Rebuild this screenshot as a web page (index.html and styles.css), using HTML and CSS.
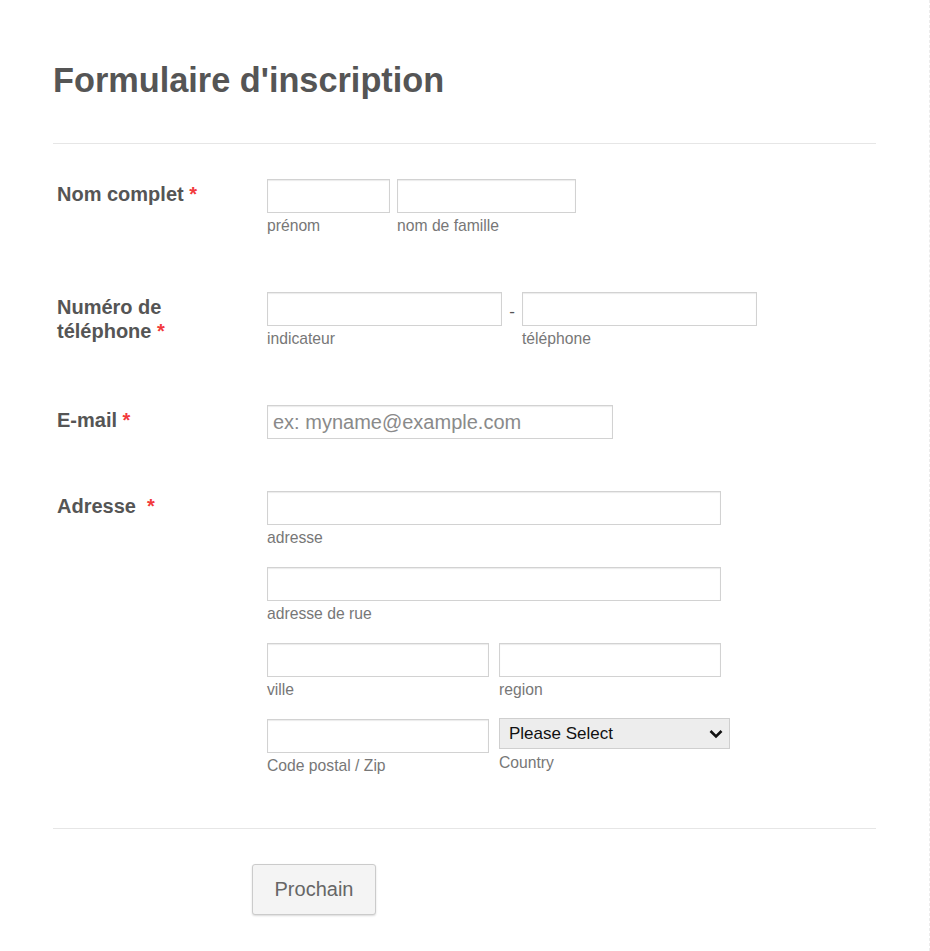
FILE: index.html
```html
<!DOCTYPE html>
<html lang="fr">
<head>
<meta charset="utf-8">
<title>Formulaire d'inscription</title>
<link rel="stylesheet" href="styles.css">
</head>
<body>
<form class="form">
  <div class="header">
    <h1 class="title">Formulaire d'inscription</h1>
  </div>

  <div class="row">
    <label class="label">Nom complet <span class="req">*</span></label>
    <div class="fields">
      <div class="line">
        <div class="field"><input class="input w-first" type="text"><span class="sub">prénom</span></div>
        <div class="field"><input class="input w-last" type="text"><span class="sub">nom de famille</span></div>
      </div>
    </div>
  </div>

  <div class="row">
    <label class="label">Numéro de<br>téléphone <span class="req">*</span></label>
    <div class="fields">
      <div class="line phone">
        <div class="field"><input class="input w-phone" type="text"><span class="sub">indicateur</span></div>
        <span class="dash">-</span>
        <div class="field"><input class="input w-phone" type="text"><span class="sub">téléphone</span></div>
      </div>
    </div>
  </div>

  <div class="row">
    <label class="label">E-mail <span class="req">*</span></label>
    <div class="fields">
      <input class="input w-email" type="text" placeholder="ex: myname@example.com">
    </div>
  </div>

  <div class="row">
    <label class="label">Adresse &nbsp;<span class="req">*</span></label>
    <div class="fields addr">
      <div class="field"><input class="input w-addr" type="text"><span class="sub">adresse</span></div>
      <div class="field"><input class="input w-addr" type="text"><span class="sub">adresse de rue</span></div>
      <div class="line half">
        <div class="field"><input class="input w-half" type="text"><span class="sub">ville</span></div>
        <div class="field"><input class="input w-half" type="text"><span class="sub">region</span></div>
      </div>
      <div class="line half">
        <div class="field"><input class="input w-half" type="text"><span class="sub">Code postal / Zip</span></div>
        <div class="field select-field">
          <span class="select-wrap">
            <select class="select"><option>Please Select</option></select>
            <svg class="chev" width="14" height="10" viewBox="0 0 14 10"><path d="M1.5 2 L7 7.5 L12.5 2" fill="none" stroke="#111" stroke-width="2.6"/></svg>
          </span>
          <span class="sub">Country</span>
        </div>
      </div>
    </div>
  </div>

  <div class="footer">
    <button class="btn" type="button">Prochain</button>
  </div>
</form>
</body>
</html>
```

FILE: styles.css
```css
html, body {
  margin: 0;
  padding: 0;
  background: #fff;
}
body {
  font-family: "Liberation Sans", Arial, sans-serif;
  color: #555;
  border-right: 1px dashed #ececec;
  min-height: 951px;
  box-sizing: border-box;
}
.form {
  width: 823px;
  margin-left: 53px;
  padding-top: 56px;
}
.header {
  border-bottom: 1px solid #e6e6e6;
  padding-bottom: 39px;
  margin-bottom: 9px;
}
.title {
  margin: 0;
  font-size: 34.3px;
  line-height: 48px;
  font-weight: bold;
  color: #555;
}
.row {
  display: grid;
  grid-template-columns: 210px 1fr;
  padding: 26px 0 26px 4px;
}
.label {
  font-size: 20px;
  font-weight: bold;
  line-height: 24px;
  padding-top: 3px;
  color: #555;
}
.req {
  color: #f23a3c;
}
.fields {
  display: flex;
  flex-direction: column;
}
.line {
  display: flex;
  gap: 7px;
}
.line.phone {
  gap: 0;
}
.line.half {
  gap: 10px;
}
.addr {
  gap: 15px;
}
.field {
  display: flex;
  flex-direction: column;
}
.input {
  box-sizing: border-box;
  height: 34px;
  border: 1px solid #d2d2d2;
  box-shadow: inset 0 1px 1px #ececec;
  border-radius: 0;
  margin: 0;
  padding: 0 5px;
  font-family: "Liberation Sans", Arial, sans-serif;
  font-size: 20px;
  color: #555;
  background: #fff;
  outline: none;
}
.input::placeholder {
  color: #8a8a8a;
}
.sub {
  display: block;
  margin-top: 4px;
  margin-bottom: 5px;
  font-size: 15.7px;
  line-height: 18px;
  color: #777;
}
.w-first { width: 123px; }
.w-last { width: 179px; }
.w-phone { width: 235px; }
.w-email { width: 346px; }
.w-addr { width: 454px; }
.w-half { width: 222px; }
.dash {
  width: 20px;
  text-align: center;
  font-size: 17px;
  line-height: 40px;
  color: #555;
}
.select-field {
  margin-top: -1px;
}
.select-wrap {
  position: relative;
  display: block;
  width: 231px;
  height: 31px;
}
.select {
  appearance: none;
  -webkit-appearance: none;
  box-sizing: border-box;
  width: 231px;
  height: 31px;
  margin: 0;
  padding: 0 0 0 9px;
  border: 1px solid #cfcfcf;
  border-radius: 0;
  background: #ededed;
  font-family: "Liberation Sans", Arial, sans-serif;
  font-size: 17px;
  color: #111;
  outline: none;
}
.chev {
  position: absolute;
  right: 7px;
  top: 11px;
}
.select-field .sub {
  margin-top: 5px;
}
.footer {
  border-top: 1px solid #e6e6e6;
  margin-top: 22px;
  padding: 35px 0 0 199px;
}
.btn {
  box-sizing: border-box;
  width: 124px;
  height: 51px;
  border: 1px solid #cbcbcb;
  border-radius: 3px;
  background: #f4f4f4;
  box-shadow: 0 1px 2px rgba(0,0,0,0.15);
  font-family: "Liberation Sans", Arial, sans-serif;
  font-size: 20px;
  color: #666;
  cursor: pointer;
}
```
